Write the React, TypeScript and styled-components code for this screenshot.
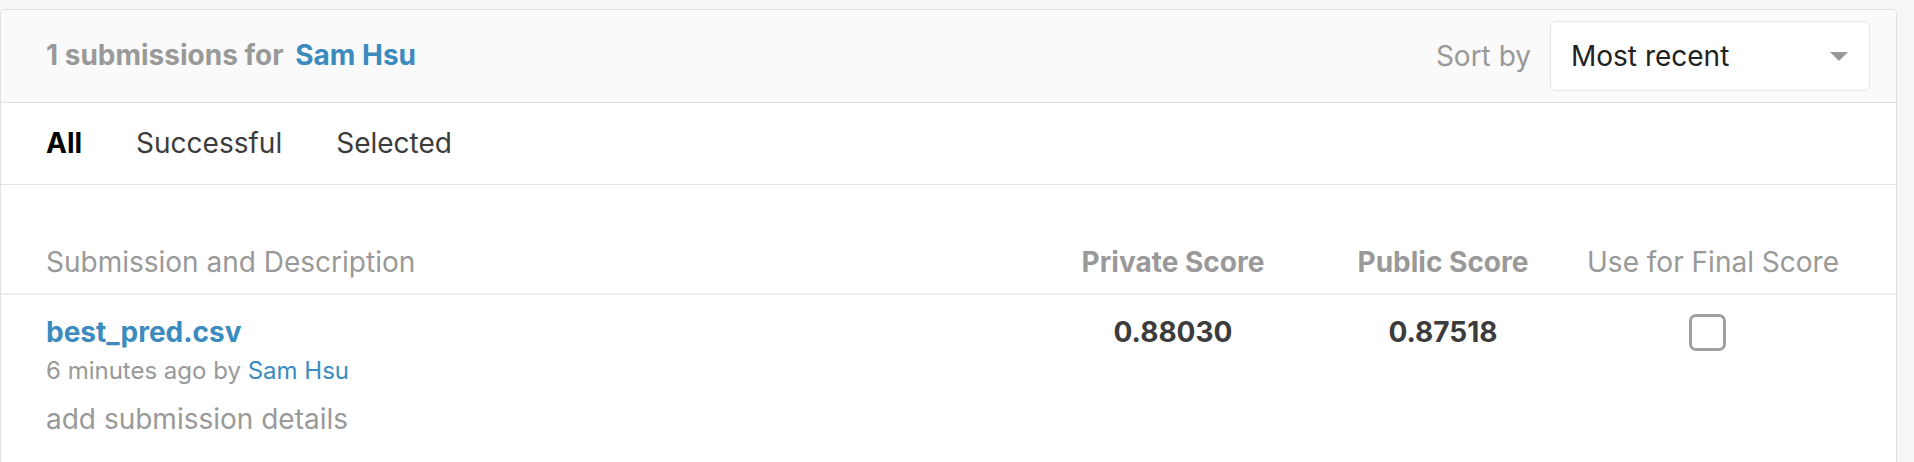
import React from "react";
import styled, { createGlobalStyle } from "styled-components";

const GlobalStyle = createGlobalStyle`
  html, body {
    margin: 0;
    padding: 0;
    background: #f4f6f8;
  }
  body {
    font-family: Inter, "Noto Sans", sans-serif;
    -webkit-font-smoothing: antialiased;
  }
  * { box-sizing: border-box; }
`;

const Page = styled.div`
  height: 462px;
  overflow: hidden;
  padding: 9px 17px 0 0;
`;

const Card = styled.section`
  background: #fff;
  border: 1px solid #dfe0e1;
  border-radius: 5px 5px 0 0;
  min-height: 520px;
`;

const Header = styled.header`
  display: flex;
  align-items: center;
  justify-content: space-between;
  height: 93px;
  padding: 0 26px 0 45px;
  background: #fafafa;
  border-bottom: 1px solid #e3e3e3;
  border-radius: 5px 5px 0 0;
`;

const Title = styled.h2`
  margin: 0 0 2px;
  font-size: 28px;
  font-weight: 700;
  color: #999;
  line-height: 40px;
`;

const Link = styled.a<{ $bold?: boolean }>`
  color: #3b8bbf;
  text-decoration: none;
  font-weight: ${(p) => (p.$bold ? 700 : 400)};
`;

const OwnerLink = styled(Link)`
  margin-left: 5px;
`;

const SortWrap = styled.div`
  display: flex;
  align-items: center;
  gap: 19px;
`;

const SortLabel = styled.span`
  font-size: 28px;
  color: #999;
`;

const Select = styled.div`
  width: 320px;
  height: 70px;
  display: flex;
  align-items: center;
  justify-content: space-between;
  padding: 0 21px 0 20px;
  background: #fff;
  border: 1px solid #e6e6e6;
  border-radius: 6px;
  font-size: 28px;
  color: #222;
`;

const Caret = styled.span`
  width: 0;
  height: 0;
  border-left: 9px solid transparent;
  border-right: 9px solid transparent;
  border-top: 9px solid #999;
`;

const Tabs = styled.nav`
  display: flex;
  align-items: center;
  gap: 54px;
  height: 82px;
  padding: 0 45px 2px;
  border-bottom: 1px solid #e3e3e3;
`;

const Tab = styled.span<{ $active?: boolean }>`
  font-size: 28px;
  line-height: 40px;
  font-weight: ${(p) => (p.$active ? 700 : 400)};
  color: ${(p) => (p.$active ? "#000" : "#3c3c3c")};
`;

const TableRow = styled.div<{ $head?: boolean }>`
  display: grid;
  grid-template-columns: 1fr 270px 270px 270px;
  align-items: start;
  padding: ${(p) => (p.$head ? "57px 48px 11px 45px" : "19px 48px 0 45px")};
  border-bottom: ${(p) => (p.$head ? "2px solid #efefef" : "none")};
`;

const HeadCell = styled.div<{ $bold?: boolean; $center?: boolean }>`
  font-size: 28px;
  line-height: 40px;
  color: #999;
  font-weight: ${(p) => (p.$bold ? 700 : 400)};
  text-align: ${(p) => (p.$center ? "center" : "left")};
`;

const FileName = styled(Link)`
  display: block;
  font-size: 28px;
  line-height: 36px;
`;

const Meta = styled.div`
  margin-top: 1px;
  font-size: 24px;
  line-height: 40px;
  color: #999;
`;

const Description = styled.div`
  margin-top: 8px;
  font-size: 28px;
  line-height: 40px;
  color: #999;
`;

const Score = styled.div`
  font-size: 28px;
  line-height: 36px;
  font-weight: 700;
  color: #3c3c3c;
  text-align: center;
`;

const CheckCell = styled.div`
  display: flex;
  justify-content: center;
  padding: 0 11px 0 0;
`;

const Checkbox = styled.span`
  width: 37px;
  height: 37px;
  border: 3px solid #a0a0a0;
  border-radius: 7px;
  background: #fff;
`;

export default function App() {
  return (
    <>
      <GlobalStyle />
      <Page>
        <Card>
          <Header>
            <Title>
              1 submissions for<OwnerLink $bold href="#"> Sam Hsu</OwnerLink>
            </Title>
            <SortWrap>
              <SortLabel>Sort by</SortLabel>
              <Select>
                <span>Most recent</span>
                <Caret />
              </Select>
            </SortWrap>
          </Header>
          <Tabs>
            <Tab $active>All</Tab>
            <Tab>Successful</Tab>
            <Tab>Selected</Tab>
          </Tabs>
          <TableRow $head>
            <HeadCell>Submission and Description</HeadCell>
            <HeadCell $bold $center>Private Score</HeadCell>
            <HeadCell $bold $center>Public Score</HeadCell>
            <HeadCell $center>Use for Final Score</HeadCell>
          </TableRow>
          <TableRow>
            <div>
              <FileName $bold href="#">best_pred.csv</FileName>
              <Meta>
                6 minutes ago by <Link href="#">Sam Hsu</Link>
              </Meta>
              <Description>add submission details</Description>
            </div>
            <Score>0.88030</Score>
            <Score>0.87518</Score>
            <CheckCell>
              <Checkbox />
            </CheckCell>
          </TableRow>
        </Card>
      </Page>
    </>
  );
}
